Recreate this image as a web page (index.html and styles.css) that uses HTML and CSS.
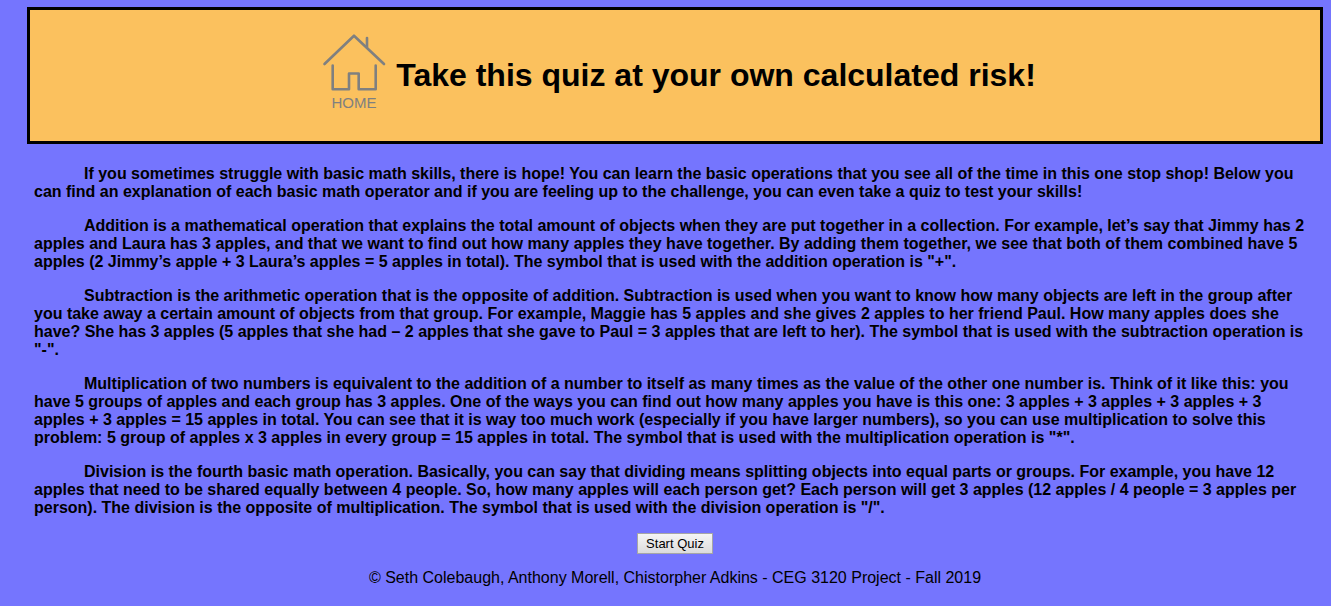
FILE: index.html
```html
<!DOCTYPE html>
<html lang="en">
<head>
<meta charset="utf-8">
<title>Math Quiz</title>
<link rel="stylesheet" href="styles.css">
</head>
<body>
<header class="banner">
  <a class="home" href="#" aria-label="Home">
    <svg class="home-icon" viewBox="0 0 64 80" width="64" height="80">
      <g fill="none" stroke="#7f8080" stroke-width="2.6" stroke-linejoin="round" stroke-linecap="round">
        <path d="M2.500 31L32 2.700L62 31"/>
        <path d="M45 14V5"/>
        <path d="M10.700 32.500V56.300H27V40.500H36.700V56.300H53.700V32.500"/>
      </g>
      <text x="32" y="75" text-anchor="middle" class="home-label">HOME</text>
    </svg>
  </a>
  <h1 class="title">Take this quiz at your own calculated risk!</h1>
</header>
<main class="content">
  <p class="text">If you sometimes struggle with basic math skills, there is hope! You can learn the basic operations that you see all of the time in this one stop shop! Below you can find an explanation of each basic math operator and if you are feeling up to the challenge, you can even take a quiz to test your skills!</p>
  <p class="text">Addition is a mathematical operation that explains the total amount of objects when they are put together in a collection. For example, let’s say that Jimmy has 2 apples and Laura has 3 apples, and that we want to find out how many apples they have together. By adding them together, we see that both of them combined have 5 apples (2 Jimmy’s apple + 3 Laura’s apples = 5 apples in total). The symbol that is used with the addition operation is "+".</p>
  <p class="text">Subtraction is the arithmetic operation that is the opposite of addition. Subtraction is used when you want to know how many objects are left in the group after you take away a certain amount of objects from that group. For example, Maggie has 5 apples and she gives 2 apples to her friend Paul. How many apples does she have? She has 3 apples (5 apples that she had – 2 apples that she gave to Paul = 3 apples that are left to her). The symbol that is used with the subtraction operation is "-".</p>
  <p class="text">Multiplication of two numbers is equivalent to the addition of a number to itself as many times as the value of the other one number is. Think of it like this: you have 5 groups of apples and each group has 3 apples. One of the ways you can find out how many apples you have is this one: 3 apples + 3 apples + 3 apples + 3 apples + 3 apples = 15 apples in total. You can see that it is way too much work (especially if you have larger numbers), so you can use multiplication to solve this problem: 5 group of apples x 3 apples in every group = 15 apples in total. The symbol that is used with the multiplication operation is "*".</p>
  <p class="text">Division is the fourth basic math operation. Basically, you can say that dividing means splitting objects into equal parts or groups. For example, you have 12 apples that need to be shared equally between 4 people. So, how many apples will each person get? Each person will get 3 apples (12 apples / 4 people = 3 apples per person). The division is the opposite of multiplication. The symbol that is used with the division operation is "/".</p>
  <button class="start" type="button">Start Quiz</button>
</main>
<footer class="credits">© Seth Colebaugh, Anthony Morell, Chistorpher Adkins - CEG 3120 Project - Fall 2019</footer>
</body>
</html>
```
FILE: styles.css
```css
body {
  margin: 7px 8px 0 27px;
  background: #7575fe;
  color: #000;
  font: 16px/18px "Liberation Sans", Arial, sans-serif;
}
.banner {
  display: flex;
  justify-content: center;
  align-items: center;
  gap: 10px;
  padding: 23px 0 28px 8px;
  border: 3px solid #000;
  background: #fbc15e;
}
.home {
  display: block;
}
.home-icon {
  display: block;
}
.home-label {
  font: 15px "Liberation Sans", Arial, sans-serif;
  fill: #7f8080;
}
.title {
  margin: 0;
  padding-top: 4px;
  font-size: 32px;
  line-height: 36px;
}
.content {
  display: flex;
  flex-direction: column;
  gap: 16px;
  padding: 21px 7px 0;
}
.text {
  margin: 0;
  font-weight: bold;
  text-indent: 50px;
}
.start {
  align-self: center;
  padding: 1px 8px;
  border: 1px solid #a6a6a6;
  background: linear-gradient(#f5f5f5, #dcdcdc);
  color: #000;
  font: 13px/17px "Liberation Sans", Arial, sans-serif;
}
.credits {
  padding: 15px 0 16px;
  text-align: center;
}
```
